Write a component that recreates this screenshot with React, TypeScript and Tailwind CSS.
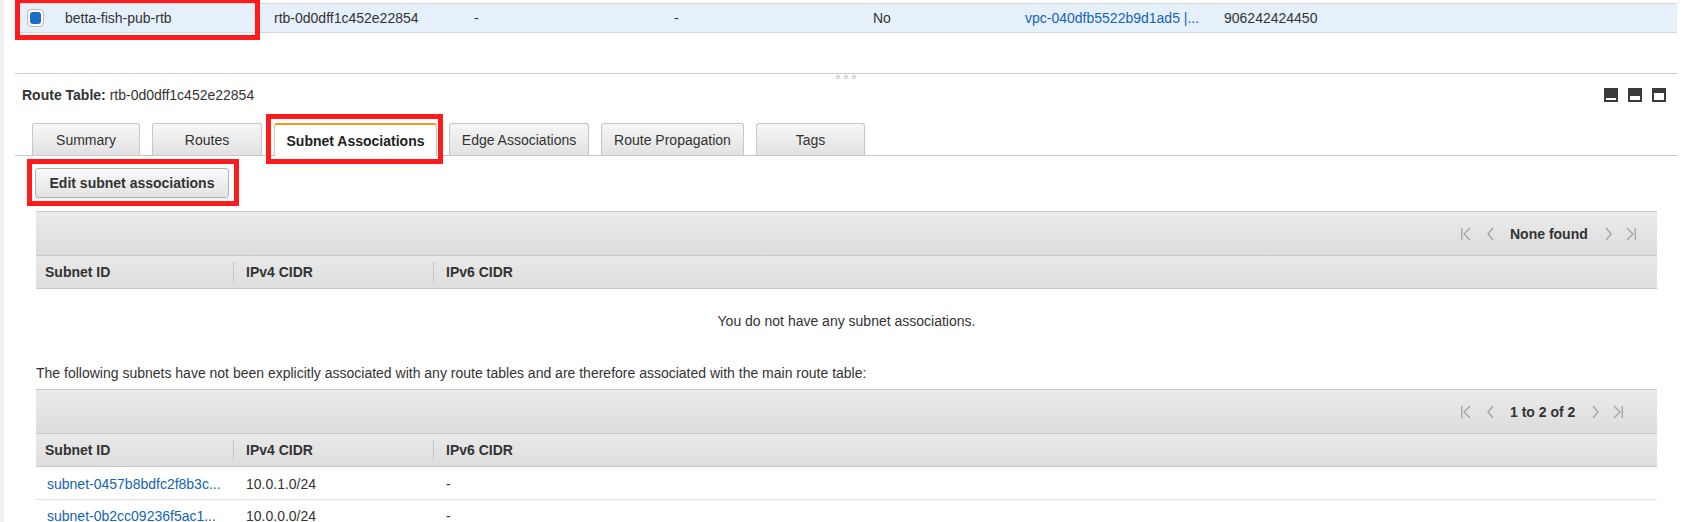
import React from "react";

const tabs = [
  { label: "Summary", width: "w-[108px]" },
  { label: "Routes", width: "w-[110px]" },
  { label: "Subnet Associations", width: "w-[163px]", active: true },
  { label: "Edge Associations", width: "w-[140px]" },
  { label: "Route Propagation", width: "w-[143px]" },
  { label: "Tags", width: "w-[109px]" },
];

const subnets = [
  { id: "subnet-0457b8bdfc2f8b3c...", ipv4: "10.0.1.0/24", ipv6: "-" },
  { id: "subnet-0b2cc09236f5ac1...", ipv4: "10.0.0.0/24", ipv6: "-" },
];

// annotation frame drawn over a highlighted element
function RedFrame({ className }: { className: string }) {
  return (
    <span
      className={`pointer-events-none absolute border-[5px] border-[#ff1b1b] ${className}`}
    />
  );
}

function PagerArrow({ dir }: { dir: "first" | "prev" | "next" | "last" }) {
  const stroke = "#a3a3a3";
  if (dir === "first")
    return (
      <svg width="10" height="14" viewBox="0 0 10 14" fill="none">
        <line x1="0.75" y1="1" x2="0.75" y2="13" stroke={stroke} strokeWidth="1.3" />
        <polyline points="9,1 3,7 9,13" stroke={stroke} strokeWidth="1.3" />
      </svg>
    );
  if (dir === "prev")
    return (
      <svg width="7" height="14" viewBox="0 0 7 14" fill="none">
        <polyline points="6,1 1,7 6,13" stroke={stroke} strokeWidth="1.3" />
      </svg>
    );
  if (dir === "next")
    return (
      <svg width="7" height="14" viewBox="0 0 7 14" fill="none">
        <polyline points="1,1 6,7 1,13" stroke={stroke} strokeWidth="1.3" />
      </svg>
    );
  return (
    <svg width="10" height="14" viewBox="0 0 10 14" fill="none">
      <polyline points="1,1 7,7 1,13" stroke={stroke} strokeWidth="1.3" />
      <line x1="9.25" y1="1" x2="9.25" y2="13" stroke={stroke} strokeWidth="1.3" />
    </svg>
  );
}

function Pager({ label }: { label: string }) {
  return (
    <div className="flex h-[44px] justify-end border-t border-[#c9c9c9] bg-gradient-to-b from-[#ebebeb] to-[#dcdcdc]">
      <div className="flex w-[196px] items-center">
        <PagerArrow dir="first" />
        <span className="ml-[16px]">
          <PagerArrow dir="prev" />
        </span>
        <span className="ml-[16px] font-bold text-[#333]">{label}</span>
        <span className="ml-[17px]">
          <PagerArrow dir="next" />
        </span>
        <span className="ml-[14px]">
          <PagerArrow dir="last" />
        </span>
      </div>
    </div>
  );
}

function HeaderRow() {
  return (
    <div className="flex h-[34px] items-center border-y border-b-[#c8c8c8] border-t-[#c9c9c9] bg-gradient-to-b from-[#e9e9e9] to-[#dedede] font-bold text-[#333]">
      <div className="w-[197px] pl-[9px]">Subnet ID</div>
      <div className="flex w-[200px] items-center">
        <span className="h-[20px] w-px bg-[#c4c4c4]" />
        <span className="pl-[12px]">IPv4 CIDR</span>
      </div>
      <div className="flex flex-1 items-center">
        <span className="h-[20px] w-px bg-[#c4c4c4]" />
        <span className="pl-[12px]">IPv6 CIDR</span>
      </div>
    </div>
  );
}

function SizeIcon({ top }: { top: number }) {
  return (
    <svg width="14" height="14" viewBox="0 0 14 14">
      <rect width="14" height="14" fill="#3a3a3a" />
      <rect x="2" y={top} width="10" height={12 - top} fill="#fff" />
    </svg>
  );
}

export default function App() {
  return (
    <div className="flex min-h-screen bg-white font-['Liberation_Sans',Arial,sans-serif] text-[14px] leading-none text-[#333]">
      <div className="w-[4px] shrink-0 bg-[#f0f0f0]" />

      <div className="ml-[11px] w-[1662px] shrink-0 pt-[3px]">
        {/* selected route table row */}
        <div className="relative flex h-[30px] items-center border-y border-[#d6d6d6] bg-[#e6f0fb]">
          <RedFrame className="left-0 top-[-6px] h-[42px] w-[245px]" />
          <div className="w-[40px] pl-[12px]">
            <span className="flex h-[18px] w-[17px] rounded-[4px] border border-[#b9b9b9] bg-white p-[2px]">
              <span className="flex-1 rounded-[3px] bg-[#1d6cc8]" />
            </span>
          </div>
          <div className="w-[209px] pl-[10px]">betta-fish-pub-rtb</div>
          <div className="w-[200px] pl-[10px]">rtb-0d0dff1c452e22854</div>
          <div className="w-[200px] pl-[10px]">-</div>
          <div className="w-[199px] pl-[10px]">-</div>
          <div className="w-[152px] pl-[10px]">No</div>
          <div className="w-[199px] pl-[10px] text-[#1464b4]">vpc-040dfb5522b9d1ad5 |...</div>
          <div className="flex-1 pl-[10px]">906242424450</div>
        </div>

        <div className="h-[40px]" />

        {/* split pane divider */}
        <div className="h-px bg-[#cccccc]" />
        <div className="flex h-[6px] items-center justify-center gap-[4px]">
          <span className="h-[4px] w-[4px] rounded-full border border-[#bdbdbd]" />
          <span className="h-[4px] w-[4px] rounded-full border border-[#bdbdbd]" />
          <span className="h-[4px] w-[4px] rounded-full border border-[#bdbdbd]" />
        </div>

        <div className="flex h-[30px] items-center justify-between pl-[7px] pr-[11px]">
          <div>
            <span className="font-bold">Route Table:</span> rtb-0d0dff1c452e22854
          </div>
          <div className="flex gap-[10px]">
            <SizeIcon top={10} />
            <SizeIcon top={8} />
            <SizeIcon top={5} />
          </div>
        </div>

        {/* tabs */}
        <div className="mt-[13px] flex h-[33px] items-end gap-[12px] border-b border-[#c6c6c6] pl-[17px]">
          {tabs.map((t) =>
            t.active ? (
              <div
                key={t.label}
                className={`relative mb-[-1px] flex h-[33px] items-center justify-center rounded-t-[3px] border-x border-t-2 border-x-[#c6c6c6] border-t-[#f5961f] bg-white font-bold text-[#222] ${t.width}`}
              >
                <RedFrame className="-left-[9px] -right-[7px] -top-[11px] -bottom-[8px]" />
                {t.label}
              </div>
            ) : (
              <div
                key={t.label}
                className={`flex h-[32px] items-center justify-center rounded-t-[3px] border-x border-t border-[#c6c6c6] bg-gradient-to-b from-[#f6f6f6] to-[#e2e2e2] text-[#333] ${t.width}`}
              >
                {t.label}
              </div>
            )
          )}
        </div>

        <div className="pl-[20px] pt-[12px]">
          <button className="relative flex h-[30px] w-[194px] items-center justify-center rounded-[3px] border border-[#b4b4b4] bg-gradient-to-b from-[#fafafa] to-[#e3e3e3] font-bold text-[#333] shadow-[0_1px_1px_rgba(0,0,0,0.08)]">
            <RedFrame className="-left-[9px] -right-[11px] -top-[10px] -bottom-[9px]" />
            Edit subnet associations
          </button>
        </div>

        <div className="ml-[21px] mr-[20px]">
          {/* explicit associations */}
          <div className="mt-[13px]">
            <Pager label="None found" />
            <HeaderRow />
            <div className="flex h-[64px] items-center justify-center">
              You do not have any subnet associations.
            </div>
          </div>
        </div>

        <div className="ml-[21px] mt-[10px] flex h-[20px] items-center">
          The following subnets have not been explicitly associated with any route tables and are therefore associated with the main route table:
        </div>

        <div className="ml-[21px] mr-[20px] mt-[6px]">
          <Pager label="1 to 2 of 2" />
          <div className="h-[35px]">
            <HeaderRow />
          </div>
          {subnets.map((s) => (
            <div key={s.id} className="flex h-[32px] items-center border-b border-[#e1e1e1]">
              <div className="w-[197px] pl-[11px] text-[#1464b4]">{s.id}</div>
              <div className="w-[200px] pl-[13px]">{s.ipv4}</div>
              <div className="flex-1 pl-[13px]">{s.ipv6}</div>
            </div>
          ))}
        </div>
      </div>
    </div>
  );
}
